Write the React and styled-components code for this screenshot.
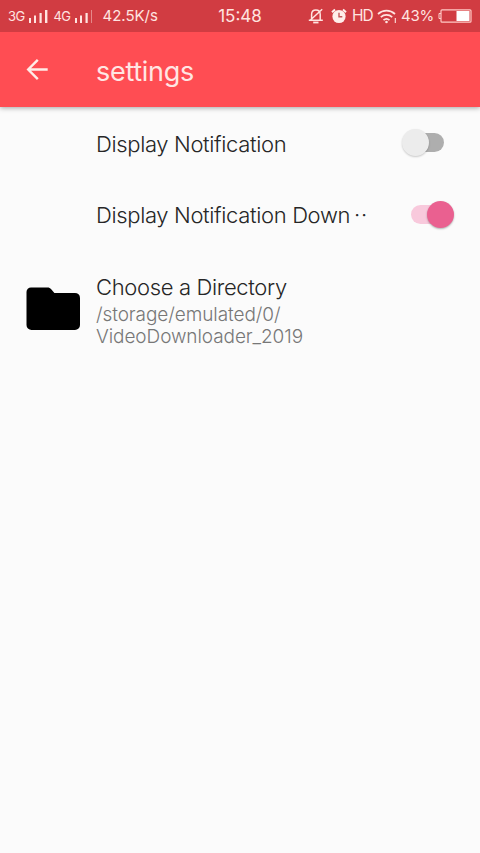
import React from 'react'
import styled, { createGlobalStyle } from 'styled-components'

const GlobalStyle = createGlobalStyle`
    * {
        box-sizing: border-box;
    }
    body {
        margin: 0;
        background-color: #fbfbfb;
        font-family: Inter, Roboto, sans-serif;
    }
`

const Screen = styled.div`
    width: 480px;
    height: 853px;
    overflow: hidden;
    background-color: #fbfbfb;
`

const StatusBar = styled.div`
    position: relative;
    z-index: 1;
    display: flex;
    align-items: center;
    height: 32px;
    padding: 0 8px;
    background-color: #d13c42;
    color: #ffe4e0;
`

const StatusSide = styled.div`
    display: flex;
    align-items: center;
    flex: 1;
    justify-content: ${({ $end }) => ($end ? 'flex-end' : 'flex-start')};

    svg {
        flex: none;
    }
`

const StatusText = styled.span`
    font-size: ${({ $size }) => $size}px;
    line-height: 20px;
    letter-spacing: ${({ $spacing }) => $spacing || 0}px;
    margin-left: ${({ $left }) => $left || 0}px;
    margin-right: ${({ $right }) => $right || 0}px;
    white-space: nowrap;
`

const Toolbar = styled.header`
    display: flex;
    align-items: center;
    height: 75px;
    padding-left: 26px;
    background-color: #ff4d53;
    box-shadow: 0 1px 5px rgba(0, 0, 0, 0.35);
`

const BackButton = styled.button`
    display: flex;
    width: 70px;
    padding: 0;
    border: 0;
    background: none;
`

const Title = styled.h1`
    margin: 5px 0 0;
    color: #ffe6e3;
    font-size: 27px;
    font-weight: 400;
    line-height: 34px;
    letter-spacing: -0.3px;
`

const Row = styled.div`
    display: flex;
    align-items: center;
    height: ${({ $tall }) => ($tall ? 117 : 71.5)}px;
    padding-right: 22px;
`

const RowIcon = styled.div`
    display: flex;
    flex: none;
    width: 96px;
    padding-left: 26px;
`

const RowBody = styled.div`
    flex: 1;
    min-width: 0;
    padding-top: 3px;
`

const Label = styled.div`
    color: #262626;
    font-size: 22px;
    font-weight: 300;
    line-height: 27px;
    letter-spacing: -0.35px;
    white-space: nowrap;
`

const Dots = styled.span`
    margin-left: 4px;
    letter-spacing: 0.6px;
`

const Summary = styled.div`
    margin-top: 2px;
    padding-top: 1px;
    margin-bottom: -1px;
    color: #777;
    font-size: 19px;
    font-weight: 300;
    line-height: 22px;
    letter-spacing: -0.08px;
`

const Switch = styled.button`
    display: flex;
    align-items: center;
    flex: none;
    width: ${({ $on }) => ($on ? 47 : 56)}px;
    height: 30px;
    padding: 0;
    border: 0;
    background: none;
`

const Track = styled.span`
    display: flex;
    align-items: center;
    justify-content: ${({ $on }) => ($on ? 'flex-end' : 'flex-start')};
    width: 32px;
    height: 19px;
    margin-left: ${({ $on }) => ($on ? 0 : 10)}px;
    border-radius: 10px;
    background-color: ${({ $on }) => ($on ? '#f8c9dc' : '#aeaeae')};
`

const Thumb = styled.span`
    flex: none;
    width: 27px;
    height: 27px;
    margin: 0 ${({ $on }) => ($on ? '-11px 0 0' : '0 0 -10px')};
    border-radius: 50%;
    background-color: ${({ $on }) => ($on ? '#ea6090' : '#ececec')};
    box-shadow: 0 1px 2px rgba(0, 0, 0, ${({ $on }) => ($on ? 0.3 : 0.2)});
`

function Signal ({ weak }) {
  return (
    <svg width='19' height='14' viewBox='0 0 19 14' fill='#ffe4e0'>
      <rect x='0' y='9' width='2' height='5' />
      <rect x='5' y='6.5' width='2' height='7.5' />
      <rect x='10.5' y='4' width='2.2' height='10' />
      <rect x='16' y='1' width={weak ? 1 : 2.4} height='13' opacity={weak ? 0.45 : 1} />
    </svg>
  )
}

function MutedBell () {
  return (
    <svg width='16' height='16' viewBox='0 0 16 16' fill='none' stroke='#ffe4e0' strokeWidth='1.5'>
      <path d='M.8 12.2h14M3.6 11.800V6.500c0-2.800 1.700-4.500 4.300-4.500s4.300 1.700 4.300 4.500v5.300M14.2 1.300 2.200 12.300' />
      <path d='M5.200 14.500h5.300' strokeWidth='1.8' />
    </svg>
  )
}

function AlarmClock () {
  return (
    <svg width='16' height='16' viewBox='0 0 16 16'>
      <path d='M1 4.2 4 1.4M15 4.2 12 1.4' stroke='#ffeeea' strokeWidth='2' />
      <circle cx='8' cy='8.5' r='6.6' fill='#ffeeea' />
      <path d='M8 4.8v4h3.3' fill='none' stroke='#c4585a' strokeWidth='1.4' />
    </svg>
  )
}

function Wifi () {
  return (
    <svg width='20' height='15' viewBox='0 0 20 15' fill='none' stroke='#ffe4e0' strokeWidth='1.7'>
      <path d='M1 5c4.8-4.4 12.2-4.4 17 0M3.8 8.2c3.3-3 8.1-3 11.4 0M6.5 11.1c1.8-1.6 4.2-1.6 6 0' />
      <circle cx='9.5' cy='13' r='1.3' fill='#ffe4e0' stroke='none' />
      <path d='M18.3 9v5' strokeWidth='1.1' />
    </svg>
  )
}

function Battery () {
  return (
    <svg width='34' height='14' viewBox='0 0 34 14'>
      <path d='M3 4.5H1v5h2' fill='none' stroke='#ffd0cc' />
      <rect x='3' y='.8' width='30' height='12.4' rx='1' fill='none' stroke='#ffc9c5' strokeWidth='1.2' />
      <rect x='18.5' y='2' width='13' height='10' fill='#fff' />
    </svg>
  )
}

function BackArrow () {
  return (
    <svg width='23' height='22' viewBox='0 0 23 22' fill='none' stroke='#ffece7' strokeWidth='2.4'>
      <path d='M21.7 10.5H2.5M11.8 .8 2.2 10.5l9.6 9.7' />
    </svg>
  )
}

function Folder () {
  return (
    <svg width='55' height='44' viewBox='0 0 55 44'>
      <path d='M5 .5h16.5c1.6 0 2.6.5 3.7 1.7l3.2 3.7H49a5 5 0 0 1 5 5V38a5 5 0 0 1-5 5H5.5a5 5 0 0 1-5-5V5A4.5 4.5 0 0 1 5 .5Z' />
    </svg>
  )
}

function Toggle ({ on, label }) {
  return (
    <Switch $on={on} role='switch' aria-checked={Boolean(on)} aria-label={label}>
      <Track $on={on}>
        <Thumb $on={on} />
      </Track>
    </Switch>
  )
}

export default function App () {
  return (
    <Screen>
      <GlobalStyle />
      {/* status bar */}
      <StatusBar>
        <StatusSide>
          <StatusText $size={13} $spacing={-0.6} $right={4}>3G</StatusText>
          <Signal />
          <StatusText $size={13} $spacing={-0.6} $left={6} $right={5}>4G</StatusText>
          <Signal weak />
          <StatusText $size={15} $left={8}>42.5K/s</StatusText>
        </StatusSide>
        <StatusText $size={17}>15:48</StatusText>
        <StatusSide $end>
          <MutedBell />
          <StatusText $size={15} $right={7} />
          <AlarmClock />
          <StatusText $size={15.5} $spacing={-0.9} $left={5} $right={4}>HD</StatusText>
          <Wifi />
          <StatusText $size={15} $spacing={-0.2} $left={4} $right={4}>43%</StatusText>
          <Battery />
        </StatusSide>
      </StatusBar>
      {/* toolbar */}
      <Toolbar>
        <BackButton aria-label='Back'>
          <BackArrow />
        </BackButton>
        <Title>settings</Title>
      </Toolbar>
      {/* preferences */}
      <Row>
        <RowIcon />
        <RowBody>
          <Label>Display Notification</Label>
        </RowBody>
        <Toggle label='Display Notification' />
      </Row>
      <Row>
        <RowIcon />
        <RowBody>
          <Label>Display Notification Down<Dots>··</Dots></Label>
        </RowBody>
        <Toggle on label='Display Notification Down' />
      </Row>
      <Row $tall>
        <RowIcon>
          <Folder />
        </RowIcon>
        <RowBody>
          <Label>Choose a Directory</Label>
          <Summary>
            /storage/emulated/0/
            <br />
            VideoDownloader_2019
          </Summary>
        </RowBody>
      </Row>
    </Screen>
  )
}
